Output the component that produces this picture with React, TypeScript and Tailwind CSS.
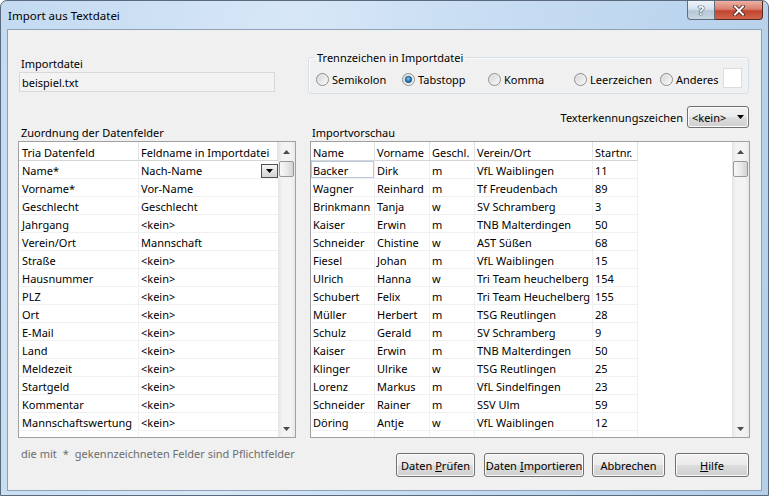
import React from "react";

const leftRows: [string, string][] = [
  ["Name*", "Nach-Name"],
  ["Vorname*", "Vor-Name"],
  ["Geschlecht", "Geschlecht"],
  ["Jahrgang", "<kein>"],
  ["Verein/Ort", "Mannschaft"],
  ["Straße", "<kein>"],
  ["Hausnummer", "<kein>"],
  ["PLZ", "<kein>"],
  ["Ort", "<kein>"],
  ["E-Mail", "<kein>"],
  ["Land", "<kein>"],
  ["Meldezeit", "<kein>"],
  ["Startgeld", "<kein>"],
  ["Kommentar", "<kein>"],
  ["Mannschaftswertung", "<kein>"],
  ["Sportart", "<kein>"],
];

const rightRows: string[][] = [
  ["Backer", "Dirk", "m", "VfL Waiblingen", "11"],
  ["Wagner", "Reinhard", "m", "Tf Freudenbach", "89"],
  ["Brinkmann", "Tanja", "w", "SV Schramberg", "3"],
  ["Kaiser", "Erwin", "m", "TNB Malterdingen", "50"],
  ["Schneider", "Chistine", "w", "AST Süßen", "68"],
  ["Fiesel", "Johan", "m", "VfL Waiblingen", "15"],
  ["Ulrich", "Hanna", "w", "Tri Team heuchelberg", "154"],
  ["Schubert", "Felix", "m", "Tri Team Heuchelberg", "155"],
  ["Müller", "Herbert", "m", "TSG Reutlingen", "28"],
  ["Schulz", "Gerald", "m", "SV Schramberg", "9"],
  ["Kaiser", "Erwin", "m", "TNB Malterdingen", "50"],
  ["Klinger", "Ulrike", "w", "TSG Reutlingen", "25"],
  ["Lorenz", "Markus", "m", "VfL Sindelfingen", "23"],
  ["Schneider", "Rainer", "m", "SSV Ulm", "59"],
  ["Döring", "Antje", "w", "VfL Waiblingen", "12"],
  ["Groß", "Thomas", "m", "TV Bondorf", "104"],
];

const rightHeaders = ["Name", "Vorname", "Geschl.", "Verein/Ort", "Startnr."];
const colW = ["w-[64px]", "w-[55px]", "w-[45px]", "w-[118px]", "w-[45px]"];

function ArrowUp() {
  return (
    <svg width="7" height="4" viewBox="0 0 7 4">
      <polygon points="0,4 3.5,0 7,4" fill="#4a4a4a" />
    </svg>
  );
}

function ArrowDown({ color = "#4a4a4a" }: { color?: string }) {
  return (
    <svg width="7" height="4" viewBox="0 0 7 4">
      <polygon points="0,0 7,0 3.5,4" fill={color} />
    </svg>
  );
}

function ScrollBar() {
  return (
    <div className="w-[17px] h-full shrink-0 flex flex-col bg-[linear-gradient(to_right,#e4e4e4,#f3f3f3_25%,#f3f3f3_75%,#e9e9e9)]">
      <div className="h-[17px] shrink-0 flex items-center justify-center pt-[2px]">
        <ArrowUp />
      </div>
      <div className="mt-[2px] mx-[1px] h-[16px] shrink-0 rounded-[2px] border border-[#979797] bg-[linear-gradient(to_right,#f8f8f8,#e8e8e8_55%,#d2d2d2)]" />
      <div className="flex-1" />
      <div className="h-[17px] shrink-0 flex items-center justify-center">
        <ArrowDown />
      </div>
    </div>
  );
}

function Radio({ checked }: { checked?: boolean }) {
  return (
    <svg width="13" height="13" viewBox="0 0 13 13" className="shrink-0">
      <defs>
        <linearGradient id="rgoff" x1="0" y1="0" x2="1" y2="1">
          <stop offset="0" stopColor="#d2d2d2" />
          <stop offset="1" stopColor="#fbfbfb" />
        </linearGradient>
        <radialGradient id="rgdot" cx="0.45" cy="0.4" r="0.6">
          <stop offset="0" stopColor="#7cc3ee" />
          <stop offset="0.6" stopColor="#2f7bb5" />
          <stop offset="1" stopColor="#184f7c" />
        </radialGradient>
      </defs>
      <circle cx="6.5" cy="6.5" r="6" fill="url(#rgoff)" stroke="#8e8f8f" strokeWidth="1" />
      <circle cx="6.5" cy="6.5" r="4.5" fill="none" stroke="#f4f4f4" strokeWidth="0.8" opacity="0.7" />
      {checked && <circle cx="6.5" cy="6.5" r="3.3" fill="url(#rgdot)" stroke="#1d4f78" strokeWidth="0.6" />}
    </svg>
  );
}

function WinButton({ w, children }: { w: string; children: React.ReactNode }) {
  return (
    <div
      className={`${w} h-[24px] shrink-0 border border-[#707070] rounded-[3px] bg-[linear-gradient(to_bottom,#f2f2f2_0%,#ebebeb_50%,#dddddd_50%,#cfcfcf_100%)] shadow-[inset_0_0_0_1px_#fbfbfb] flex items-center justify-center leading-[15px] whitespace-nowrap`}
    >
      {children}
    </div>
  );
}

export default function App() {
  return (
    <div className="w-[769px] h-[496px] overflow-hidden flex flex-col border border-[#5a6a7c] rounded-t-[7px] bg-[linear-gradient(100deg,#c3daf1_0%,#d7e7f7_35%,#c9def3_55%,#bcd5ee_80%,#b6cfe9_100%)] font-['Noto_Sans',sans-serif] text-[11px] text-black">
      {/* title bar */}
      <div className="h-[28px] shrink-0 flex items-start">
        <div className="pl-[7px] pt-[7px] leading-[15px] text-[11.5px] text-[#000]">Import aus Textdatei</div>
        <div className="ml-auto mr-[5px] flex">
          <div className="w-[28px] h-[19px] border border-t-0 border-[#5d6e80] rounded-bl-[4px] bg-[linear-gradient(to_bottom,#eef3f8_0%,#d6e1ec_45%,#b7c7d7_55%,#c9d6e3_100%)] flex items-center justify-center">
            <span className="text-white font-bold text-[13px] leading-[13px] [text-shadow:0_0_1px_#22303e,0_0_1px_#22303e,0_0_1px_#22303e]">?</span>
          </div>
          <div className="w-[48px] h-[19px] border border-l-0 border-t-0 border-[#5a2a22] rounded-br-[4px] bg-[linear-gradient(to_bottom,#eeb1a2_0%,#d9826f_45%,#c2442e_55%,#d0654c_100%)] flex items-center justify-center">
            <svg width="12" height="11" viewBox="0 0 12 11">
              <path d="M2 1.5 L10 9.5 M10 1.5 L2 9.5" stroke="#3b1812" strokeWidth="3.6" strokeLinecap="square" />
              <path d="M2 1.5 L10 9.5 M10 1.5 L2 9.5" stroke="#ffffff" strokeWidth="2" strokeLinecap="square" />
            </svg>
          </div>
        </div>
      </div>

      {/* client area */}
      <div className="mx-[6px] h-[462px] shrink-0 border border-[#8da2b7] bg-[#f0f0f0] flex flex-col">
        <div className="flex pl-[10px]">
          {/* left column */}
          <div className="w-[278px] shrink-0 flex flex-col">
            <div className="mt-[26px] pl-[3px] leading-[15px]">Importdatei</div>
            <div className="mt-[1px] ml-[1px] w-[256px] h-[20px] border border-[#d8d8d8] bg-[#f3f3f3] pl-[2px] pt-[2px] leading-[15px]">
              beispiel.txt
            </div>
            <div className="mt-[33px] pl-[3px] leading-[15px]">Zuordnung der Datenfelder</div>
            <div className="mt-[1px] w-[278px] h-[297px] border border-[#a0a0a0] bg-white flex overflow-hidden">
              <div className="w-[259px] shrink-0 flex flex-col overflow-hidden">
                <div className="h-[19px] shrink-0 flex border-b border-[#d5d5d5]">
                  <div className="w-[120px] shrink-0 border-r border-[#e3e3e3] pl-[3px] pt-[3px] leading-[15px] whitespace-nowrap">
                    Tria Datenfeld
                  </div>
                  <div className="flex-1 border-r border-[#e3e3e3] pl-[2px] pt-[3px] leading-[15px] whitespace-nowrap overflow-hidden">
                    Feldname in Importdatei
                  </div>
                </div>
                {leftRows.map(([a, b], i) => (
                  <div key={i} className="h-[18px] shrink-0 flex border-b border-[#f0f0f0]">
                    <div className="w-[120px] shrink-0 border-r border-[#f0f0f0] pl-[3px] pt-[2px] leading-[15px] whitespace-nowrap overflow-hidden">
                      {a}
                    </div>
                    {i === 0 ? (
                      <div className="flex-1 flex pl-[2px]">
                        <span className="pt-[2px] leading-[15px] whitespace-nowrap">{b}</span>
                        <div className="ml-auto mt-[3px] w-[17px] h-[14px] border border-[#505050] bg-[linear-gradient(to_bottom,#f6f6f6,#e2e2e2_50%,#d4d4d4)] flex items-center justify-center">
                          <ArrowDown color="#000" />
                        </div>
                      </div>
                    ) : (
                      <div className="flex-1 pl-[2px] pt-[2px] leading-[15px] whitespace-nowrap overflow-hidden">{b}</div>
                    )}
                  </div>
                ))}
              </div>
              <ScrollBar />
            </div>
          </div>

          {/* right column */}
          <div className="ml-[12px] w-[442px] shrink-0 flex flex-col">
            <fieldset className="mt-[20px] w-[441px] border border-[#d5dfe5] rounded-[3px] shadow-[inset_1px_1px_0_#fbfbfb]">
              <legend className="ml-[6px] px-[2px] leading-[15px]">Trennzeichen in Importdatei</legend>
              <div className="flex items-center pl-[7px] pt-[4px] pb-[4px] h-[28px]">
                <div className="w-[86px] flex items-center">
                  <Radio />
                  <span className="ml-[3px] leading-[15px]">Semikolon</span>
                </div>
                <div className="w-[86px] flex items-center">
                  <Radio checked />
                  <span className="ml-[3px] leading-[15px]">Tabstopp</span>
                </div>
                <div className="w-[86px] flex items-center">
                  <Radio />
                  <span className="ml-[3px] leading-[15px]">Komma</span>
                </div>
                <div className="w-[86px] flex items-center">
                  <Radio />
                  <span className="ml-[3px] leading-[15px]">Leerzeichen</span>
                </div>
                <div className="flex items-center">
                  <Radio />
                  <span className="ml-[3px] leading-[15px]">Anderes</span>
                  <div className="ml-[4px] -mt-[3px] w-[19px] h-[20px] bg-white border border-[#dcdcdc]" />
                </div>
              </div>
            </fieldset>
            <div className="mt-[12px] flex justify-end items-center pr-[1px]">
              <span className="mr-[4px] leading-[15px]">Texterkennungszeichen</span>
              <div className="w-[62px] h-[22px] border border-[#707070] rounded-[3px] bg-[linear-gradient(to_bottom,#f2f2f2_0%,#ebebeb_50%,#dddddd_50%,#cfcfcf_100%)] shadow-[inset_0_0_0_1px_#fbfbfb] flex items-center pl-[4px] pr-[4px]">
                <span className="leading-[15px]">&lt;kein&gt;</span>
                <span className="ml-auto">
                  <ArrowDown color="#000" />
                </span>
              </div>
            </div>
            <div className="-mt-[3px] pl-[4px] leading-[15px]">Importvorschau</div>
            <div className="mt-[1px] ml-[2px] w-[440px] h-[297px] border border-[#a0a0a0] bg-white flex overflow-hidden">
              <div className="w-[421px] shrink-0 flex flex-col overflow-hidden">
                <div className="h-[19px] shrink-0 flex">
                  {rightHeaders.map((h, i) => (
                    <div
                      key={i}
                      className={`${colW[i]} shrink-0 border-b border-r border-b-[#d5d5d5] border-r-[#e3e3e3] pl-[2px] pt-[3px] leading-[15px] whitespace-nowrap overflow-hidden`}
                    >
                      {h}
                    </div>
                  ))}
                </div>
                {rightRows.map((r, ri) => (
                  <div key={ri} className="h-[18px] shrink-0 flex">
                    {r.map((c, ci) => (
                      <div
                        key={ci}
                        className={`${colW[ci]} shrink-0 border-b border-r border-[#f0f0f0] pl-[2px] pt-[2px] leading-[15px] whitespace-nowrap overflow-hidden ${
                          ri === 0 && ci === 0 ? "shadow-[inset_0_0_0_1px_#b4c9de]" : ""
                        }`}
                      >
                        {c}
                      </div>
                    ))}
                  </div>
                ))}
              </div>
              <ScrollBar />
            </div>
          </div>
        </div>

        {/* bottom row */}
        <div className="flex items-start pl-[13px] pr-[12px]">
          <div className="mt-[8px] leading-[15px] text-[#6d6d6d] whitespace-nowrap">
            die mit<span className="ml-[6px]">*</span>
            <span className="ml-[6px]">gekennzeichneten Felder sind Pflichtfelder</span>
          </div>
          <div className="ml-auto mt-[15px] flex">
            <WinButton w="w-[79px]">
              Daten <span className="underline ml-[3px]">P</span>rüfen
            </WinButton>
            <div className="ml-[9px]">
              <WinButton w="w-[100px]">
                Daten <span className="underline ml-[3px]">I</span>mportieren
              </WinButton>
            </div>
            <div className="ml-[8px]">
              <WinButton w="w-[73px]">Abbrechen</WinButton>
            </div>
            <div className="ml-[10px]">
              <WinButton w="w-[74px]">
                <span className="underline">H</span>ilfe
              </WinButton>
            </div>
          </div>
        </div>
      </div>
    </div>
  );
}
